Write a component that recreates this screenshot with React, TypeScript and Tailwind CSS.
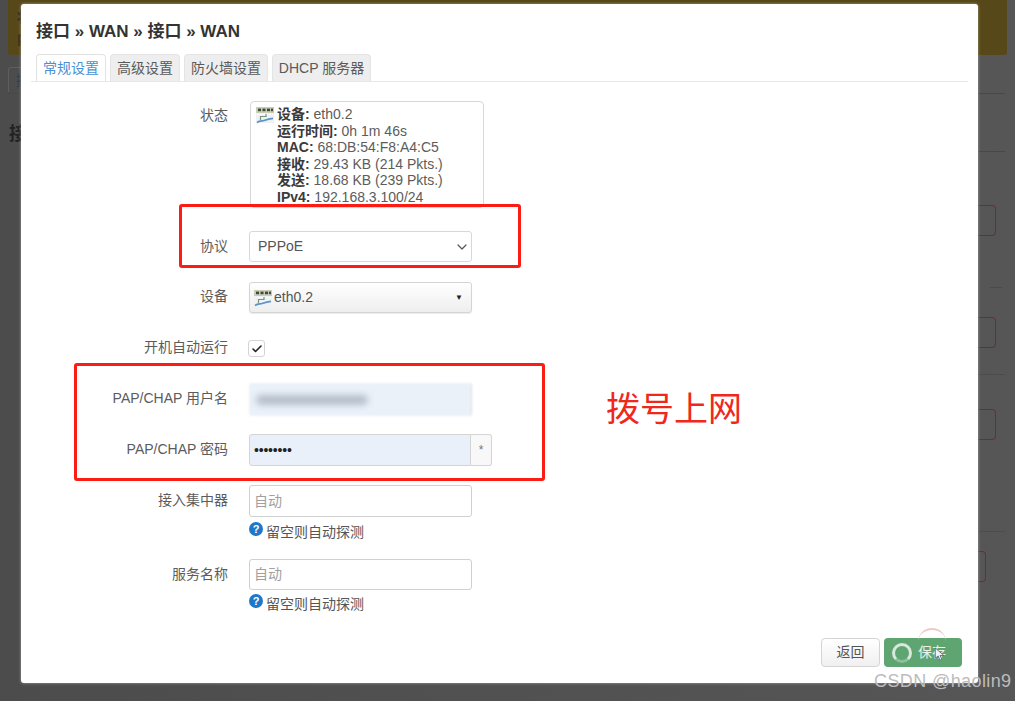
import React from "react";
import { ChevronDown, Check } from "lucide-react";

const FONT = "font-['Liberation_Sans','Noto_Sans_CJK_SC',sans-serif]";

function NetIcon({ className }: { className?: string }) {
  return (
    <svg viewBox="0 0 18 18" className={className}>
      <rect x="0" y="1" width="18" height="16" fill="#eef2f4" />
      <rect x="0" y="1" width="18" height="6" fill="#c9cdb8" />
      <rect x="2" y="2.6" width="3" height="2.6" fill="#3f4a38" />
      <rect x="6.5" y="2.6" width="3" height="2.6" fill="#3f4a38" />
      <rect x="11" y="2.6" width="3" height="2.6" fill="#3f4a38" />
      <rect x="15" y="2.6" width="2" height="2.6" fill="#3f4a38" />
      <path d="M1 8.5h16" stroke="#ffffff" strokeWidth="1" strokeDasharray="2 1" />
      <path d="M10 8v2.5H4.5V14" stroke="#7d9280" strokeWidth="1.2" fill="none" />
      <path d="M1 16.5c3-2 5-1.2 7-2s5-2 9-2.2" stroke="#5b93c9" strokeWidth="1.7" fill="none" />
    </svg>
  );
}

function Row({
  label,
  className,
  labelClass,
  children,
}: {
  label: string;
  className?: string;
  labelClass?: string;
  children: React.ReactNode;
}) {
  return (
    <div className={`flex ${className ?? ""}`}>
      <div className={`w-[192px] shrink-0 text-right text-[14px] leading-[31px] text-[#5c5c5c] ${labelClass ?? ""}`}>{label}</div>
      <div className="ml-[21px] min-w-0 flex-1">{children}</div>
    </div>
  );
}

function Help({ className }: { className: string }) {
  return (
    <div className={`flex h-[22px] items-start text-[14px] leading-[22px] text-[#555] ${className}`}>
      <span className="mt-[2px] flex h-[14px] w-[14px] items-center justify-center rounded-full bg-[#1f77c9] text-[11px] font-bold leading-none text-white">?</span>
      <span className="ml-[3px] mt-[1px]">留空则自动探测</span>
    </div>
  );
}

function TextInput({ className }: { className: string }) {
  return (
    <div className={`flex w-[223px] items-center rounded-[3px] border border-[#d0d0d0] bg-white px-[4px] text-[14px] text-[#a0a0a0] ${className}`}>自动</div>
  );
}

function Tab({ active, width, children }: { active?: boolean; width: string; children: React.ReactNode }) {
  return (
    <div
      className={`flex h-[27px] items-center justify-center rounded-t-[4px] border border-b-0 text-[14px] ${width} ${
        active ? "border-[#e2e2e2] bg-white text-[#4a90d2]" : "border-[#e4e4e4] bg-[#eeeeee] text-[#5a5a5a]"
      }`}
    >
      {children}
    </div>
  );
}

function BackRow({ top, width = "w-[18px]" }: { top: string; width?: string }) {
  return <div className={`absolute left-[978px] h-[31px] rounded-r-[4px] border-y border-r border-[#63303c] ${width} ${top}`} />;
}

export default function App() {
  return (
    <div className={`relative h-[701px] w-[1015px] overflow-hidden bg-gradient-to-r from-[#4c4c4c] to-[#565656] ${FONT}`}>
      {/* dimmed page behind the dialog */}
      <div className="mx-[8px] flex h-[55px] flex-col rounded-b-[3px] bg-[#574819] pl-[9px] pt-[6px] text-[14px] font-bold leading-[22px] text-[#2a2a1a]">
        <span>状</span>
        <span>内</span>
      </div>
      <div className="ml-[8px] mt-[12px] h-[25px] w-[40px] rounded-t-[3px] border border-b-0 border-[#5e5e5e] pl-[7px] text-[14px] leading-[24px] text-[#2d3d4d]">接</div>
      <div className="ml-[8px] mt-[1px] w-[997px] border-t border-[#484848]" />
      <div className="ml-[9px] mt-[28px] text-[18px] font-bold leading-[24px] text-[#222]">接</div>
      <div className="absolute left-[978px] top-[151px] h-px w-[27px] bg-[#484848]" />
      <div className="absolute left-[990px] top-[287px] h-px w-[12px] bg-[#4a4a4a]" />
      <div className="absolute left-[978px] top-[374px] h-px w-[27px] bg-[#4c4c4c]" />
      <div className="absolute left-[978px] top-[531px] h-px w-[27px] bg-[#4c4c4c]" />
      <BackRow top="top-[205px]" />
      <BackRow top="top-[317px]" />
      <BackRow top="top-[409px]" />
      <BackRow top="top-[551px]" width="w-[8px]" />

      {/* dialog */}
      <div className="absolute left-[21px] top-[4px] flex h-[679px] w-[957px] flex-col rounded-[3px] bg-white pl-[15px] pr-[10px] shadow-[0_0_3px_rgba(255,255,255,0.5)]">
        <h3 className="mt-[17px] text-[17px] font-bold leading-[22px] text-[#333]">接口 » WAN » 接口 » WAN</h3>
        <div className="-ml-[5px] mt-[11px] flex items-end gap-[4px] border-b border-[#e8e8e8] pl-[5px]">
          <Tab active width="w-[70px]">常规设置</Tab>
          <Tab width="w-[70px]">高级设置</Tab>
          <Tab width="w-[84px]">防火墙设置</Tab>
          <Tab width="w-[99px]">DHCP 服务器</Tab>
        </div>

        <Row label="状态" className="mt-[20px]" labelClass="-mt-[2px]">
          <div className="relative -mt-[1px] ml-[1px] h-[107px] w-[234px] rounded-[4px] border border-[#d8d8d8] pl-[26px] pt-[4px] text-[14px] leading-[16.5px] text-[#5c5c5c]">
            <NetIcon className="absolute left-[5px] top-[4px] h-[18px] w-[18px]" />
            <div><b className="text-[#3a3a3a]">设备:</b> eth0.2</div>
            <div><b className="text-[#3a3a3a]">运行时间:</b> 0h 1m 46s</div>
            <div><b className="text-[#3a3a3a]">MAC:</b> 68:DB:54:F8:A4:C5</div>
            <div><b className="text-[#3a3a3a]">接收:</b> 29.43 KB (214 Pkts.)</div>
            <div><b className="text-[#3a3a3a]">发送:</b> 18.68 KB (239 Pkts.)</div>
            <div><b className="text-[#3a3a3a]">IPv4:</b> 192.168.3.100/24</div>
          </div>
        </Row>

        <Row label="协议" className="mt-[23px]">
          <div className="flex h-[31px] w-[223px] items-center justify-between rounded-[3px] border border-[#d8d8d8] bg-white pl-[8px] pr-[1px] text-[14px] text-[#555]">
            PPPoE
            <ChevronDown size={16} className="text-[#555]" strokeWidth={1.8} />
          </div>
        </Row>

        <Row label="设备" className="mt-[20px]" labelClass="-mt-[1px]">
          <div className="flex h-[31px] w-[223px] items-center rounded-[3px] border border-[#d4d4d4] bg-gradient-to-b from-white to-[#eeeeee] pl-[4px] text-[14px] text-[#555] shadow-[0_1px_1px_rgba(0,0,0,0.08)]">
            <NetIcon className="h-[18px] w-[18px]" />
            <span className="ml-[2px] flex-1">eth0.2</span>
            <span className="mr-[8px] text-[8px] text-[#222]">▼</span>
          </div>
        </Row>

        <Row label="开机自动运行" className="mt-[19px]">
          <div className="-ml-[1px] mt-[8px] flex h-[17px] w-[17px] items-center justify-center rounded-[3px] border border-[#d4d4d4] bg-white">
            <Check size={12} strokeWidth={3.2} className="text-[#222]" />
          </div>
        </Row>

        <Row label="PAP/CHAP 用户名" className="mt-[20px]">
          <div className="flex h-[33px] w-[223px] items-center rounded-[3px] border-r border-[#d8dde4] bg-[#ebf1f9] pl-[7px] blur-[1px]">
            <div className="h-[10px] w-[112px] rounded-full bg-[#b4bdca] blur-[3px]" />
          </div>
        </Row>

        <Row label="PAP/CHAP 密码" className="mt-[18px]">
          <div className="flex h-[32px] w-[243px]">
            <div className="flex h-full w-[222px] items-center rounded-l-[3px] border border-[#d4d4d4] bg-[#e9f0fa] pl-[4px] text-[14px] tracking-[-0.2px] text-[#222]">••••••••</div>
            <div className="flex h-full flex-1 items-center justify-center rounded-r-[3px] border border-l-0 border-[#d4d4d4] bg-[#f8f8f8] text-[12px] text-[#777]">*</div>
          </div>
        </Row>

        <Row label="接入集中器" className="mt-[19px]">
          <TextInput className="h-[32px]" />
          <Help className="mt-[3px]" />
        </Row>

        <Row label="服务名称" className="mt-[17px]">
          <TextInput className="h-[31px]" />
          <Help className="mt-[2px]" />
        </Row>

        <div className="mt-auto mb-[16px] flex justify-end gap-[4px] pr-[6px]">
          <div className="flex h-[29px] w-[59px] items-center justify-center rounded-[4px] border border-[#d4d4d4] bg-gradient-to-b from-white to-[#f0f0f0] text-[14px] text-[#555]">返回</div>
          <div className="relative flex h-[29px] w-[78px] items-center rounded-[4px] bg-[#5fa572] pl-[8px] text-[14px] text-[#e8f2ea]">
            <span className="h-[20px] w-[20px] rounded-full border-[3px] border-[#d8e8dc] border-b-[#8cc09c]" />
            <span className="ml-[6px]">保存</span>
            <div className="absolute left-[34px] -top-[10px] h-[20px] w-[28px] rounded-t-full border-t-2 border-[#f0c8c8]" />
            <svg viewBox="0 0 12 16" className="absolute left-[50px] top-[9px] h-[15px] w-[12px]">
              <path d="M1 1v11l3-2.5 2 4.5 2-1-2-4h4z" fill="#eef2f4" stroke="#556" strokeWidth="0.8" />
            </svg>
          </div>
        </div>
      </div>

      {/* annotations */}
      <div className="absolute left-[179px] top-[204px] h-[64px] w-[342px] rounded-[3px] border-[3px] border-[#fb1c14]" />
      <div className="absolute left-[74px] top-[363px] h-[118px] w-[471px] rounded-[3px] border-[3px] border-[#fb1c14]" />
      <div className="absolute left-[606px] top-[388px] text-[34px] leading-[42px] text-[#f0281c]">拨号上网</div>
      <div className="absolute left-[874px] top-[671px] text-[18px] leading-[21px] tracking-[0.4px] text-[#bcbcbc]">CSDN @haolin9</div>
    </div>
  );
}
